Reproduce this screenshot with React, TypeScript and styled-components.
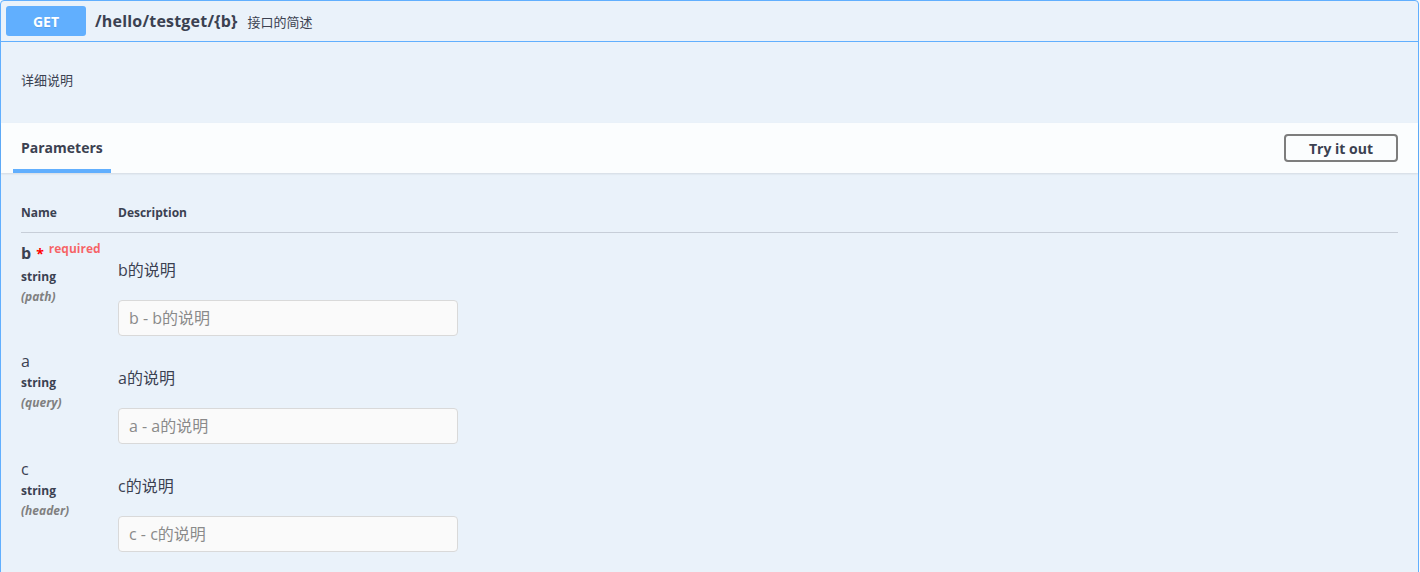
import styled, {createGlobalStyle} from 'styled-components';

const GlobalStyle = createGlobalStyle`
  body {
    margin: 0;
    background: #fafafa;
    font-family: "Open Sans", "Noto Sans CJK SC", sans-serif;
    color: #3b4151;
  }
`;

const Opblock = styled.div`
  width: 1419px;
  box-sizing: border-box;
  border: 1px solid #61affe;
  border-radius: 4px;
  background: rgba(97, 175, 254, 0.1);
  margin: 0 0 15px;
`;

const Summary = styled.div`
  display: flex;
  align-items: center;
  padding: 5px;
  border-bottom: 1px solid #61affe;
`;

const Method = styled.span`
  box-sizing: border-box;
  width: 80px;
  height: 30px;
  display: flex;
  align-items: center;
  justify-content: center;
  border-radius: 3px;
  background: #61affe;
  color: #fff;
  font-size: 14px;
  font-weight: 700;
  text-shadow: 0 1px 0 rgba(0, 0, 0, 0.1);
`;

const Path = styled.span`
  padding: 0 10px 0 9px;
  font-size: 16px;
  font-weight: 700;
  letter-spacing: 0.2px;
`;

const SummaryText = styled.span`
  font-size: 13px;
`;

const DescriptionWrapper = styled.div`
  padding: 28px 20px 33px;
  font-size: 13px;
  line-height: 20px;
`;

const SectionHeader = styled.div`
  display: flex;
  align-items: center;
  justify-content: space-between;
  min-height: 50px;
  box-sizing: border-box;
  padding: 0 20px;
  background: rgba(255, 255, 255, 0.8);
  box-shadow: 0 1px 2px rgba(0, 0, 0, 0.1);
`;

const TabItem = styled.h4`
  position: relative;
  margin: 0;
  font-size: 14px;
  font-weight: 700;
  line-height: 20px;

  &::after {
    content: '';
    position: absolute;
    left: -10%;
    width: 120%;
    bottom: -15px;
    height: 4px;
    background: #61affe;
  }
`;

const TryButton = styled.button`
  box-sizing: border-box;
  height: 28px;
  padding: 0 23px;
  border: 2px solid #7d7d7d;
  border-radius: 4px;
  background: transparent;
  font-family: inherit;
  font-size: 14px;
  font-weight: 700;
  color: #3b4151;
`;

const TableContainer = styled.div`
  padding: 20px;
`;

const Grid = styled.div`
  display: grid;
  grid-template-columns: 97px 1fr;
`;

const HeadCell = styled.div`
  padding: 12px 0;
  font-size: 12px;
  font-weight: 700;
  line-height: 15px;
  border-bottom: 1px solid rgba(59, 65, 81, 0.2);
`;

const NameCell = styled.div`
  padding: 10px 0 5px;
`;

const ParamName = styled.div<{$required?: boolean}>`
  font-size: 16px;
  line-height: 20px;
  font-weight: ${p => (p.$required ? 700 : 400)};
  white-space: nowrap;
`;

const Star = styled.span`
  color: red;
  font-size: 14px;
  margin-left: 5px;
`;

const Required = styled.span`
  position: relative;
  top: -6px;
  padding-left: 5px;
  font-size: 12px;
  font-weight: 700;
  color: rgba(255, 0, 0, 0.6);
`;

const ParamType = styled.div`
  font-size: 12px;
  font-weight: 700;
  line-height: 20px;
  margin-top: 2px;
`;

const ParamIn = styled.div`
  font-size: 12px;
  font-weight: 700;
  font-style: italic;
  color: #808080;
  line-height: 20px;
`;

const DescCell = styled.div`
  padding: 10px 0 5px;
`;

const DescText = styled.div`
  margin-top: 17px;
  font-size: 16px;
  line-height: 20px;
`;

const Input = styled.input`
  display: block;
  box-sizing: border-box;
  width: 340px;
  height: 36px;
  margin-top: 20px;
  padding: 0 10px;
  border: 1px solid #d9d9d9;
  border-radius: 4px;
  background: #fafafa;
  font-family: inherit;
  font-size: 16px;
  color: #3b4151;

  &::placeholder {
    color: #8a8a8a;
  }
`;

const params = [
  {name: 'b', type: 'string', in: 'path', required: true},
  {name: 'a', type: 'string', in: 'query', required: false},
  {name: 'c', type: 'string', in: 'header', required: false},
];

export default function App() {
  return (
    <>
      <GlobalStyle />
      <Opblock>
        <Summary>
          <Method>GET</Method>
          <Path>/hello/testget/&#123;b&#125;</Path>
          <SummaryText>接口的简述</SummaryText>
        </Summary>
        <DescriptionWrapper>详细说明</DescriptionWrapper>
        <SectionHeader>
          <TabItem>Parameters</TabItem>
          <TryButton>Try it out</TryButton>
        </SectionHeader>
        <TableContainer>
          <Grid>
            <HeadCell>Name</HeadCell>
            <HeadCell>Description</HeadCell>
            {params.map(p => (
              <>
                <NameCell key={p.name + '-n'}>
                  <ParamName $required={p.required}>
                    {p.name}
                    {p.required && (
                      <>
                        <Star>*</Star>
                        <Required>required</Required>
                      </>
                    )}
                  </ParamName>
                  <ParamType>{p.type}</ParamType>
                  <ParamIn>({p.in})</ParamIn>
                </NameCell>
                <DescCell key={p.name + '-d'}>
                  <DescText>{p.name}的说明</DescText>
                  <Input placeholder={`${p.name} - ${p.name}的说明`} />
                </DescCell>
              </>
            ))}
          </Grid>
        </TableContainer>
      </Opblock>
    </>
  );
}
